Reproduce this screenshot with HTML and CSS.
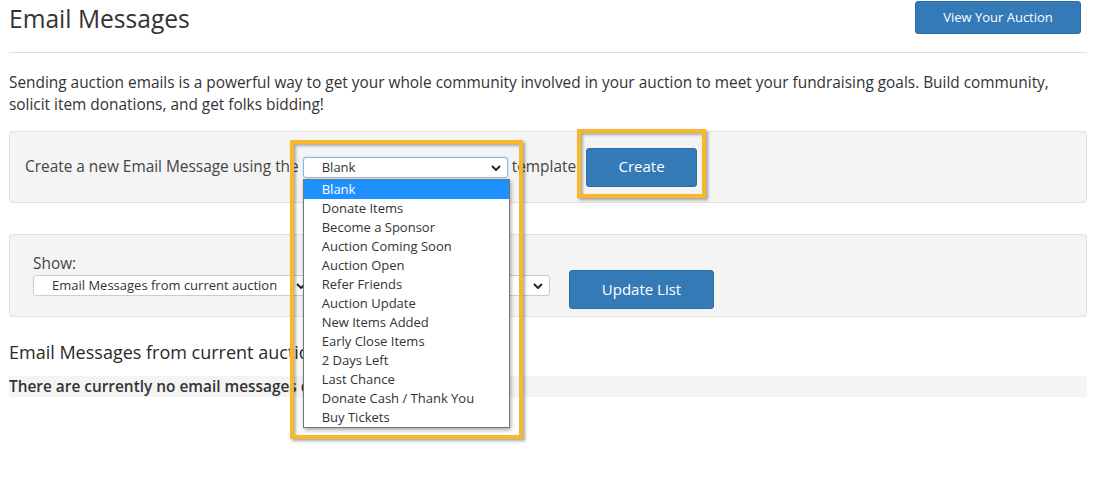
FILE: index.html
```html
<!DOCTYPE html>
<html lang="en">
<head>
<meta charset="utf-8">
<title>Email Messages</title>
<link rel="stylesheet" href="styles.css">
</head>
<body>
<div class="page">
  <header class="page-header">
    <h1 class="title">Email Messages</h1>
    <a class="btn btn-top" href="#">View Your Auction</a>
  </header>

  <p class="intro">Sending auction emails is a powerful way to get your whole community involved in your auction to meet your fundraising goals. Build community, solicit item donations, and get folks bidding!</p>

  <div class="well well-create">
    <span class="label-text">Create a new Email Message using the</span>
    <span class="select-wrap">
      <span class="select select-focus">Blank<svg class="chev" viewBox="0 0 10 6" width="10" height="6"><path d="M1 1 L5 5 L9 1" fill="none" stroke="#222" stroke-width="1.9"/></svg></span>
      <span class="hl hl-drop"></span>
      <ul class="dropdown">
        <li class="active">Blank</li>
        <li>Donate Items</li>
        <li>Become a Sponsor</li>
        <li>Auction Coming Soon</li>
        <li>Auction Open</li>
        <li>Refer Friends</li>
        <li>Auction Update</li>
        <li>New Items Added</li>
        <li>Early Close Items</li>
        <li>2 Days Left</li>
        <li>Last Chance</li>
        <li>Donate Cash / Thank You</li>
        <li>Buy Tickets</li>
      </ul>
    </span>
    <span class="label-text tpl">template</span>
    <span class="btn-wrap">
      <span class="hl hl-create"></span>
      <a class="btn btn-lg btn-create" href="#">Create</a>
    </span>
  </div>

  <div class="well well-show">
    <div class="show-col">
      <div class="show-label">Show:</div>
      <div class="show-selects">
        <span class="select sel-a">Email Messages from current auction<svg class="chev" viewBox="0 0 10 6" width="10" height="6"><path d="M1 1 L5 5 L9 1" fill="none" stroke="#222" stroke-width="1.9"/></svg></span>
        <span class="select sel-b">All<svg class="chev" viewBox="0 0 10 6" width="10" height="6"><path d="M1 1 L5 5 L9 1" fill="none" stroke="#222" stroke-width="1.9"/></svg></span>
      </div>
    </div>
    <a class="btn btn-lg btn-update" href="#">Update List</a>
  </div>

  <h3 class="list-title">Email Messages from current auction</h3>
  <div class="empty">There are currently no email messages defined.</div>
</div>
</body>
</html>
```

FILE: styles.css
```css
html, body {
  margin: 0;
  padding: 0;
  background: #fff;
}
body {
  font-family: "Open Sans", "DejaVu Sans", sans-serif;
  color: #333;
  font-size: 15.4px;
  line-height: 21.5px;
  min-height: 483px;
}
.page {
  width: 1078px;
  margin-left: 9px;
  min-height: 483px;
}
.page-header {
  display: flex;
  justify-content: space-between;
  align-items: flex-start;
  padding-top: 1px;
  height: 53px;
  box-sizing: border-box;
  border-bottom: 1px solid #dedede;
  padding-right: 6px;
}
.title {
  margin: 0;
  font-size: 24.6px;
  line-height: 36px;
  font-weight: 400;
  color: #333;
}
.btn {
  display: inline-flex;
  align-items: center;
  justify-content: center;
  background: #337ab7;
  border: 1px solid #2e6da4;
  border-radius: 3px;
  color: #fff;
  text-decoration: none;
  box-sizing: border-box;
}
.btn-top {
  width: 166px;
  height: 33px;
  font-size: 13px;
}
.intro {
  margin: 19px 0 16px;
  padding-right: 20px;
}
.well {
  background: #f4f4f4;
  border: 1px solid #e1e1e1;
  border-radius: 3px;
  box-sizing: border-box;
}
.well-create {
  display: flex;
  align-items: center;
  height: 72px;
  padding: 0 15px;
}
.label-text {
  color: #444;
}
.tpl {
  margin-left: 4px;
  margin-right: 10px;
}
.select-wrap {
  position: relative;
  margin-left: 4px;
  display: block;
}
.select {
  position: relative;
  display: block;
  box-sizing: border-box;
  height: 21px;
  line-height: 19px;
  background: #fff;
  border: 1px solid #ccc;
  border-radius: 3px;
  font-size: 13px;
  color: #333;
  padding-left: 18px;
  white-space: nowrap;
  overflow: hidden;
}
.select-focus {
  width: 205px;
  border-color: #8bb7e6;
  box-shadow: 0 0 2px rgba(102, 175, 233, 0.5);
}
.chev {
  position: absolute;
  right: 6px;
  top: 7px;
}
.dropdown {
  position: absolute;
  left: 0;
  top: 22px;
  width: 207px;
  margin: 0;
  padding: 0;
  list-style: none;
  background: #fff;
  border: 1px solid #767676;
  box-sizing: border-box;
  box-shadow: 1px 2px 4px rgba(0, 0, 0, 0.35);
  z-index: 3;
}
.dropdown li {
  height: 19px;
  line-height: 19px;
  font-size: 13px;
  padding-left: 18px;
  color: #333;
  white-space: nowrap;
}
.dropdown li.active {
  background: #1e90ff;
  color: #fff;
}
.hl {
  position: absolute;
  border: 4px solid #f9b82b;
  box-sizing: border-box;
  box-shadow: 2px 2px 3px rgba(0, 0, 0, 0.35), inset 2px 2px 3px rgba(0, 0, 0, 0.3);
  z-index: 2;
  pointer-events: none;
}
.hl-drop {
  left: -13px;
  top: -17px;
  width: 233px;
  height: 299px;
}
.btn-wrap {
  position: relative;
  display: block;
}
.hl-create {
  left: -9px;
  top: -19px;
  width: 129px;
  height: 69px;
}
.btn-lg {
  height: 39px;
  font-size: 15px;
}
.btn-create {
  width: 111px;
  position: relative;
  z-index: 1;
}
.well-show {
  display: flex;
  align-items: flex-start;
  margin-top: 31px;
  padding: 19px 23px 8px;
  height: 83px;
}
.show-col {
  display: flex;
  flex-direction: column;
}
.show-label {
  line-height: 19px;
  height: 21px;
  color: #444;
}
.show-selects {
  display: flex;
  gap: 4px;
}
.sel-a {
  width: 280px;
}
.sel-b {
  width: 233px;
}
.btn-update {
  width: 145px;
  margin-left: 19px;
  margin-top: 16px;
}
.list-title {
  margin: 23px 0 0;
  font-size: 18px;
  line-height: 25px;
  font-weight: 400;
  color: #2a2a2a;
}
.empty {
  margin-top: 11px;
  background: #f4f4f4;
  height: 21px;
  line-height: 21px;
  font-weight: 600;
  color: #333;
}
```
